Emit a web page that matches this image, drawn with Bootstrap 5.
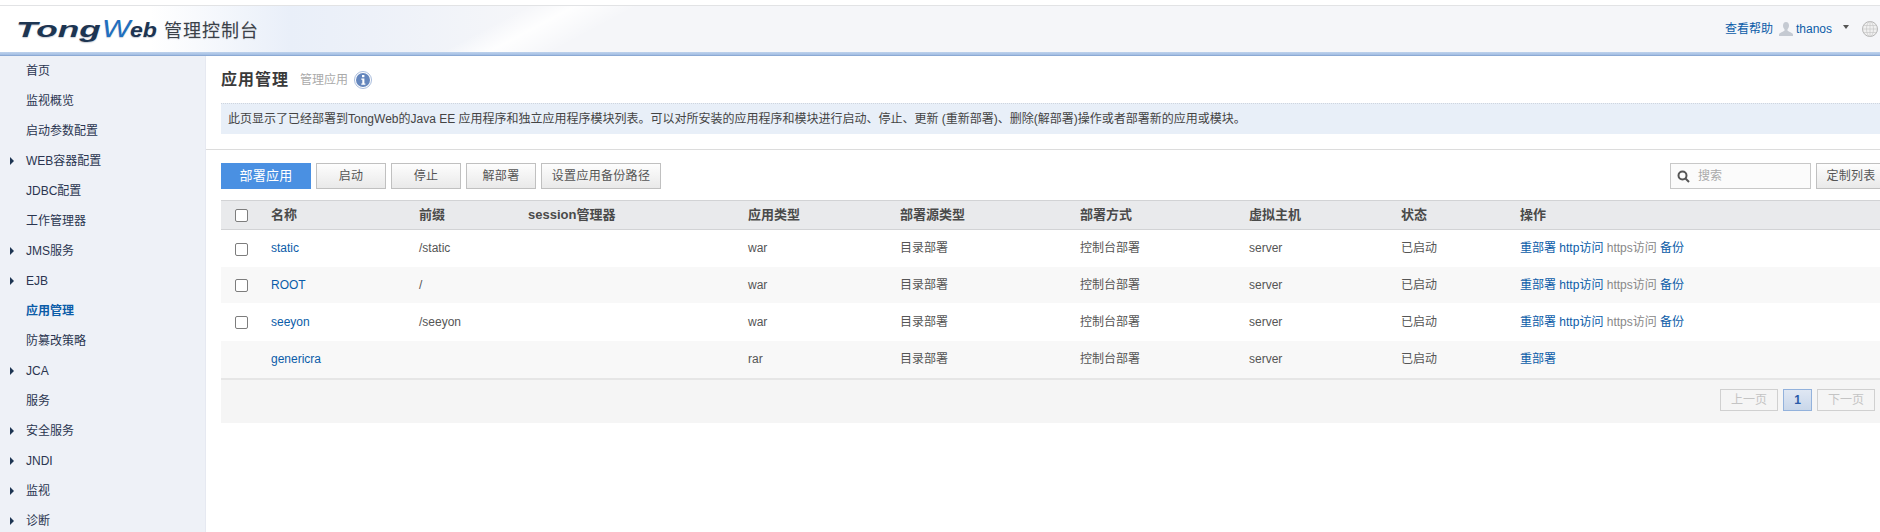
<!DOCTYPE html>
<html lang="zh-CN">
<head>
<meta charset="utf-8">
<title>TongWeb 管理控制台</title>
<link rel="stylesheet" href="https://cdn.jsdelivr.net/npm/bootstrap@5.3.0/dist/css/bootstrap.min.css">
<style>
html,body{height:532px;overflow:hidden}
body{font-family:"Liberation Sans","Noto Sans CJK SC",sans-serif;font-size:12px;color:#555;background:#fff;padding-top:5px}
a{text-decoration:none;color:#0b5ca8}
.tw-head{height:47px;border-top:1px solid #e2e3e5;background:
  linear-gradient(152deg,rgba(255,255,255,0) 0,rgba(255,255,255,0) 248px,rgba(255,255,255,.9) 270px,rgba(255,255,255,0) 300px),
  linear-gradient(90deg,#fff 0,#fff 150px,#e9eff9 290px,#edf1f9 370px,#f5f6f9 520px,#f5f6f9 100%)}
.tw-stripe{height:4px;background:linear-gradient(180deg,#bed2ec,#a9c3e6 60%,#7f9fcc)}
.tw-logo{padding-left:16px;height:46px;gap:6px}
.tw-mark{font-family:"Liberation Sans",sans-serif;font-style:italic;line-height:1;color:#1d3552;display:flex;align-items:baseline;width:142px;white-space:nowrap;text-shadow:0 1px 1px #c9ced6}
.tw-mark b{font-weight:700;font-size:22px;display:block;flex:none;width:86px;transform:scaleX(1.6);transform-origin:left}
.tw-mark i{font-weight:400;font-style:italic;color:#1f6fc0;font-size:24px;display:block;flex:none;width:28px;transform:scaleX(1.25);transform-origin:left}
.tw-mark em{font-weight:700;font-size:21px;display:block;flex:none;transform:scaleX(1.1);transform-origin:left}
.tw-cn{font-family:"Noto Sans CJK SC",sans-serif;font-size:18px;letter-spacing:1px;color:#3b4148;text-shadow:0 1px 1px #d5d9e0}
.tw-tools{padding-right:2px;font-size:12px}
.tw-help{margin-right:5px}
.tw-user{margin-left:2px}
.tw-caret{width:0;height:0;border:3.5px solid transparent;border-top:4px solid #555;border-bottom:0;margin:0 13px 4px 11px}
.tw-side{width:206px;flex:none;background:#eef1f7;border-right:1px solid #e6e9f1}
.tw-side .nav-link{height:30px;flex:none;padding:0 0 0 10px;color:#2a3550;font-size:12px;display:flex;align-items:center}
.tw-side .nav-link.tw-on{color:#0b5ca8;font-weight:700}
.tw-arrow{width:16px;flex:none}
.tw-sub .tw-arrow::before{content:"";display:block;width:0;height:0;border:4px solid transparent;border-left:4px solid #1d3552;border-right:0}
.tw-main{min-width:0;overflow:hidden;padding-left:15px}
.tw-title{height:47px;gap:11px}
.tw-title h1{font-size:16px;font-weight:700;letter-spacing:1px;color:#3a3a3a;margin:0}
.tw-title span{color:#aaa;font-size:12px}
.tw-title svg{margin-left:-5px}
.tw-desc{height:31px;background:#e8eff8;border-top:1px dotted #cfd5de;padding-left:7px;color:#444;line-height:30px;white-space:nowrap}
.tw-rule{height:1px;background:#dcdcdc;margin:15px 0 13px -15px}
.tw-bar{height:26px;margin-right:-6px;margin-bottom:11px}
.tw-group{gap:5px}
.tw-btn{height:26px;width:70px;padding:0;border:1px solid #c0c0c0;border-radius:0;font-size:12px;color:#555;background:linear-gradient(180deg,#fdfdfd,#e9e9e9);line-height:24px;letter-spacing:.3px}
.tw-btn.tw-wide{width:120px}
.tw-btn.tw-go{width:90px;background:#4a90e2;border-color:#4a90e2;color:#fff;font-size:13px}
.tw-search{width:141px;height:26px;border:1px solid #c8c8c8;background:#fbfbfb;padding-left:6px;gap:8px;color:#aaa;margin-right:5px}
.tw-grid{table-layout:fixed;width:1659px;margin:0;--bs-table-bg:transparent;--bs-table-color:#555;border-color:transparent}
.tw-grid th,.tw-grid td{padding:0;border:0;vertical-align:middle;font-size:12px;white-space:nowrap;background:transparent;box-shadow:none}
.tw-grid thead th{height:29px;font-size:13px;background:#e9eaec;border-top:1px solid #d2d3d5;border-bottom:1px solid #d2d3d5;font-weight:700;color:#4a4a4a}
.tw-grid tbody td{height:37px}
.tw-grid tbody tr:nth-child(2) td{height:36px}
.tw-grid tbody tr:nth-child(3) td{height:38px}
.tw-grid tbody tr:nth-child(even) td{background:#f8f8f8}
.tw-grid .form-check-input{width:13px;height:13px;margin:0 0 0 14px;border:1px solid #7d7d7d;border-radius:2px;display:block}
.tw-grid tbody .form-check-input{margin-top:2px}
.tw-grid .tw-off{color:#888}
.tw-foot{height:45px;background:#f5f5f5;border-top:2px solid #e6e6e6;width:1659px;gap:5px;padding-right:5px;padding-top:9px}
.tw-page{width:58px;height:22px;padding:0;border:1px solid #d0d0d0;border-radius:0;background:#f5f5f5;color:#c4c4c4;font-size:12px;line-height:20px;--bs-btn-disabled-opacity:1;--bs-btn-disabled-color:#c4c4c4;--bs-btn-disabled-bg:#f5f5f5;--bs-btn-disabled-border-color:#d0d0d0}
.tw-page.tw-cur{width:29px;background:linear-gradient(180deg,#dfe7f3,#c9d7ea);border-color:#93b2dc;color:#2a5aa8;font-weight:700}
.c1{width:50px}.c2{width:148px}.c3{width:109px}.c4{width:220px}.c5{width:152px}.c6{width:180px}.c7{width:169px}.c8{width:152px}.c9{width:119px}
</style>
</head>
<body class="d-flex flex-column">
<header>
  <div class="tw-head d-flex justify-content-between align-items-center">
    <div class="tw-logo d-flex align-items-center">
      <span class="tw-mark"><b>Tong</b><i>W</i><em>eb</em></span>
      <span class="tw-cn">管理控制台</span>
    </div>
    <div class="tw-tools d-flex align-items-center">
      <a href="#" class="tw-help">查看帮助</a>
      <svg width="16" height="16" viewBox="0 0 16 16"><path d="M8 1c2 0 3 1.500 3 3.600 0 1.700-.7 3-1.500 3.700v1.200c0 .8 3 1.300 5 3.100.5.500.5 1.400.5 2.400H1c0-1 0-1.900.5-2.400 2-1.800 5-2.300 5-3.100V8.300C5.700 7.600 5 6.300 5 4.600 5 2.500 6 1 8 1z" fill="#c5cad2"/></svg>
      <a href="#" class="tw-user">thanos</a>
      <span class="tw-caret"></span>
      <svg width="16" height="16" viewBox="0 0 16 16" fill="none" stroke="#c9c9c9" stroke-width=".7"><circle cx="8" cy="8" r="7.500" fill="#f0f0f0" stroke="#b5b5b5" stroke-width="1"/><ellipse cx="8" cy="8" rx="3.500" ry="7.500"/><path d="M8 .5v15M.5 8h15M1.500 4.500h13M1.500 11.500h13"/></svg>
    </div>
  </div>
  <div class="tw-stripe"></div>
</header>
<div class="d-flex flex-grow-1 overflow-hidden">
  <nav class="tw-side nav flex-column flex-nowrap">
    <a class="nav-link" href="#"><span class="tw-arrow"></span>首页</a>
    <a class="nav-link" href="#"><span class="tw-arrow"></span>监视概览</a>
    <a class="nav-link" href="#"><span class="tw-arrow"></span>启动参数配置</a>
    <a class="nav-link tw-sub" href="#"><span class="tw-arrow"></span>WEB容器配置</a>
    <a class="nav-link" href="#"><span class="tw-arrow"></span>JDBC配置</a>
    <a class="nav-link" href="#"><span class="tw-arrow"></span>工作管理器</a>
    <a class="nav-link tw-sub" href="#"><span class="tw-arrow"></span>JMS服务</a>
    <a class="nav-link tw-sub" href="#"><span class="tw-arrow"></span>EJB</a>
    <a class="nav-link tw-on" href="#"><span class="tw-arrow"></span>应用管理</a>
    <a class="nav-link" href="#"><span class="tw-arrow"></span>防篡改策略</a>
    <a class="nav-link tw-sub" href="#"><span class="tw-arrow"></span>JCA</a>
    <a class="nav-link" href="#"><span class="tw-arrow"></span>服务</a>
    <a class="nav-link tw-sub" href="#"><span class="tw-arrow"></span>安全服务</a>
    <a class="nav-link tw-sub" href="#"><span class="tw-arrow"></span>JNDI</a>
    <a class="nav-link tw-sub" href="#"><span class="tw-arrow"></span>监视</a>
    <a class="nav-link tw-sub" href="#"><span class="tw-arrow"></span>诊断</a>
  </nav>
  <main class="tw-main flex-grow-1">
    <div class="tw-title d-flex align-items-center">
      <h1>应用管理</h1>
      <span>管理应用</span>
      <svg width="18" height="18" viewBox="0 0 18 18"><circle cx="9" cy="9" r="8.500" fill="#fff" stroke="#a9bcdc"/><circle cx="9" cy="9" r="7" fill="#6486bd"/><rect x="8" y="4" width="2.400" height="2.200" fill="#fff"/><path d="M7.300 7.500h3.100v5h1v1.200H7.300v-1.200h1V8.700h-1z" fill="#fff"/></svg>
    </div>
    <div class="tw-desc">此页显示了已经部署到TongWeb的Java EE 应用程序和独立应用程序模块列表。可以对所安装的应用程序和模块进行启动、停止、更新 (重新部署)、删除(解部署)操作或者部署新的应用或模块。</div>
    <div class="tw-rule"></div>
    <div class="tw-bar d-flex justify-content-between">
      <div class="d-flex tw-group">
        <button class="btn tw-btn tw-go" type="button">部署应用</button>
        <button class="btn tw-btn" type="button">启动</button>
        <button class="btn tw-btn" type="button">停止</button>
        <button class="btn tw-btn" type="button">解部署</button>
        <button class="btn tw-btn tw-wide" type="button">设置应用备份路径</button>
      </div>
      <div class="d-flex">
        <div class="tw-search d-flex align-items-center">
          <svg width="13" height="13" viewBox="0 0 13 13" fill="none" stroke="#555" stroke-width="2"><circle cx="5.500" cy="5.500" r="4"/><path d="M8.500 8.500L12 12"/></svg>
          <span>搜索</span>
        </div>
        <button class="btn tw-btn" type="button">定制列表</button>
      </div>
    </div>
    <table class="table tw-grid">
      <colgroup><col class="c1"><col class="c2"><col class="c3"><col class="c4"><col class="c5"><col class="c6"><col class="c7"><col class="c8"><col class="c9"><col></colgroup>
      <thead>
        <tr><th><input class="form-check-input" type="checkbox" aria-label="全选"></th><th>名称</th><th>前缀</th><th>session管理器</th><th>应用类型</th><th>部署源类型</th><th>部署方式</th><th>虚拟主机</th><th>状态</th><th>操作</th></tr>
      </thead>
      <tbody>
        <tr><td><input class="form-check-input" type="checkbox" aria-label="static"></td><td><a href="#">static</a></td><td>/static</td><td></td><td>war</td><td>目录部署</td><td>控制台部署</td><td>server</td><td>已启动</td><td><a href="#">重部署</a> <a href="#">http访问</a> <span class="tw-off">https访问</span> <a href="#">备份</a></td></tr>
        <tr><td><input class="form-check-input" type="checkbox" aria-label="ROOT"></td><td><a href="#">ROOT</a></td><td>/</td><td></td><td>war</td><td>目录部署</td><td>控制台部署</td><td>server</td><td>已启动</td><td><a href="#">重部署</a> <a href="#">http访问</a> <span class="tw-off">https访问</span> <a href="#">备份</a></td></tr>
        <tr><td><input class="form-check-input" type="checkbox" aria-label="seeyon"></td><td><a href="#">seeyon</a></td><td>/seeyon</td><td></td><td>war</td><td>目录部署</td><td>控制台部署</td><td>server</td><td>已启动</td><td><a href="#">重部署</a> <a href="#">http访问</a> <span class="tw-off">https访问</span> <a href="#">备份</a></td></tr>
        <tr><td></td><td><a href="#">genericra</a></td><td></td><td></td><td>rar</td><td>目录部署</td><td>控制台部署</td><td>server</td><td>已启动</td><td><a href="#">重部署</a></td></tr>
      </tbody>
    </table>
    <div class="tw-foot d-flex justify-content-end align-items-start">
      <button class="btn tw-page" type="button" disabled>上一页</button>
      <button class="btn tw-page tw-cur" type="button">1</button>
      <button class="btn tw-page" type="button" disabled>下一页</button>
    </div>
  </main>
</div>
<script src="https://cdn.jsdelivr.net/npm/bootstrap@5.3.0/dist/js/bootstrap.bundle.min.js"></script>
</body>
</html>
